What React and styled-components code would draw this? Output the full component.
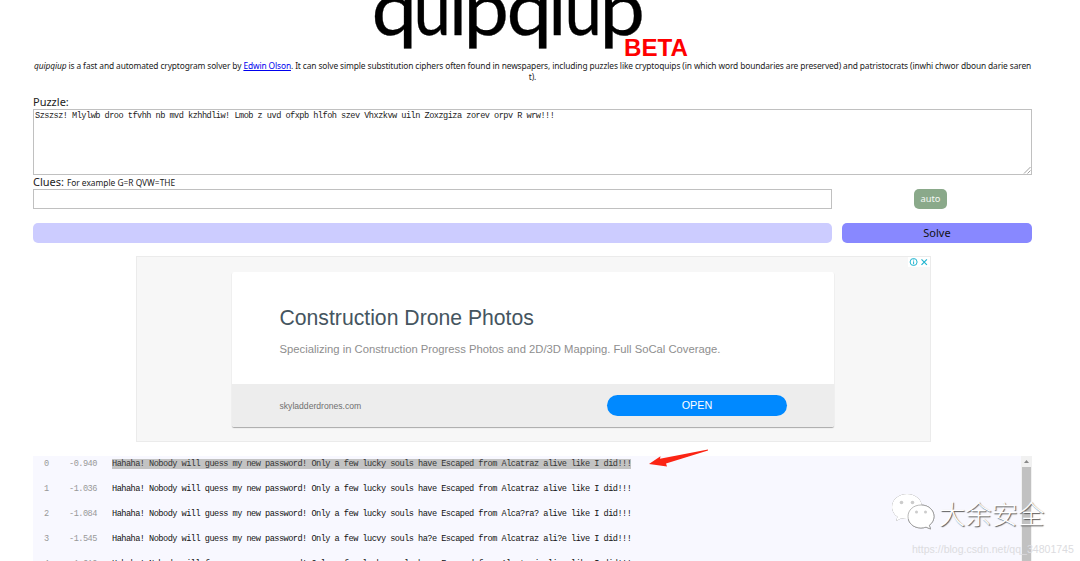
import React from 'react';
import styled, { createGlobalStyle } from 'styled-components';

const GlobalStyle = createGlobalStyle`
  * { box-sizing: border-box; }
  html, body { margin: 0; height: 561px; overflow: hidden; background: #fff; }
`;

const Page = styled.div`
  position: relative;
  width: 1080px;
  height: 561px;
  overflow: hidden;
  padding: 0 48px 0 33px;
  display: flex;
  flex-direction: column;
  font-family: 'Noto Sans', 'Open Sans', sans-serif;
  color: #222;
`;

const Header = styled.header`
  height: 60px;
  flex: none;
  padding-left: 337px;
  svg { display: block; }
`;

const Intro = styled.p`
  margin: 0;
  height: 35px;
  flex: none;
  text-align: center;
  font-size: 8.4px;
  line-height: 11px;
`;

const IntroLine = styled.span`
  display: block;
  white-space: nowrap;
  letter-spacing: -0.118px;
  a { color: #0000ee; text-decoration: underline; }
`;

const Label = styled.label`
  display: block;
  flex: none;
  height: ${(p) => p.$height};
  line-height: ${(p) => p.$height};
  font-size: 11px;
  white-space: nowrap;
  small { font-size: 8.35px; }
`;

const mono = `
  font-family: 'Liberation Mono', monospace;
  font-size: 8.6px;
  letter-spacing: -0.52px;
  white-space: pre;
`;

const PuzzleBox = styled.div`
  position: relative;
  flex: none;
  width: 999px;
  height: 66px;
  border: 1px solid #c0c0c0;
  padding: 1px 1px;
  line-height: 11px;
  color: #222;
  ${mono}
`;

const Grip = styled.svg`
  position: absolute;
  right: 0;
  bottom: 0;
`;

const FormRow = styled.div`
  display: grid;
  grid-template-columns: 799px 190px;
  column-gap: 10px;
  flex: none;
  height: 20px;
  margin-bottom: ${(p) => p.$after};
`;

const ClueInput = styled.div`
  border: 1px solid #c0c0c0;
`;

const AutoButton = styled.button`
  justify-self: center;
  width: 33px;
  height: 20px;
  margin-right: 13px;
  padding: 0;
  border: 0;
  border-radius: 5px;
  background: #8aa98a;
  color: #f3f7f3;
  font: 9.3px/20px 'Noto Sans', sans-serif;
`;

const Progress = styled.div`
  border-radius: 5px;
  background: #ccccff;
`;

const SolveButton = styled.button`
  padding: 0;
  border: 0;
  border-radius: 5px;
  background: #8888ff;
  color: #111;
  font: 11px/19px 'Noto Sans', sans-serif;
`;

const Ad = styled.section`
  position: relative;
  flex: none;
  width: 795px;
  height: 186px;
  margin: 0 0 14px 103px;
  padding: 15px 0 0 95px;
  border: 1px solid #ebebeb;
  background: #f7f7f7;
  font-family: 'Liberation Sans', Arial, sans-serif;
`;

const AdMarks = styled.svg`
  position: absolute;
  top: 0;
  right: 0;
  background: #fff;
`;

const AdCard = styled.div`
  width: 602px;
  height: 155px;
  display: flex;
  flex-direction: column;
  overflow: hidden;
  border-radius: 2px;
  background: #fff;
  box-shadow: 0 1px 1px rgba(0, 0, 0, 0.32);
`;

const AdBody = styled.div`
  height: 112px;
  padding: 33px 47.5px 0;
`;

const AdTitle = styled.h2`
  margin: 0;
  font-weight: 400;
  font-size: 21.2px;
  line-height: 26px;
  color: #455560;
  white-space: nowrap;
`;

const AdText = styled.p`
  margin: 11px 0 0;
  font-size: 11.25px;
  line-height: 14px;
  color: #8e8e8e;
  white-space: nowrap;
`;

const AdFooter = styled.div`
  flex: 1;
  display: flex;
  align-items: center;
  justify-content: space-between;
  padding: 0 47px 0 47.5px;
  background: #ededed;
  color: #707070;
  font-size: 8.6px;
  span { padding-top: 1px; }
`;

const OpenButton = styled.button`
  width: 180px;
  height: 21px;
  padding: 0;
  border: 0;
  border-radius: 11px;
  background: #0089ff;
  color: #fff;
  font: 10.8px/21px 'Liberation Sans', Arial, sans-serif;
`;

const Results = styled.div`
  flex: none;
  display: flex;
  width: 999px;
  height: 120px;
  background: #f8f8ff;
`;

const ResultList = styled.div`
  flex: 1;
`;

const ResultRow = styled.div`
  display: grid;
  grid-template-columns: 36px 43px 1fr;
  height: 25.1px;
  line-height: 16px;
  color: #999;
  ${mono}
`;

const Rank = styled.span`
  padding-left: 11px;
`;

const Solution = styled.span`
  color: #111;
  mark {
    display: inline-block;
    height: 10px;
    line-height: 10px;
    background: #c3c3c3;
    color: #333;
  }
`;

const Scrollbar = styled.div`
  width: 11px;
  display: flex;
  flex-direction: column;
  align-items: center;
  background: #f1f1f1;
  svg { flex: none; }
`;

const Thumb = styled.div`
  width: 9px;
  flex: 1;
  background: #c1c1c1;
`;

const Arrow = styled.svg`
  position: absolute;
  left: 645px;
  top: 445px;
`;

const Watermark = styled.div`
  position: absolute;
  left: 890px;
  top: 490px;
  display: flex;
  align-items: center;
  gap: 4px;
  font: 300 26.3px/46px 'Noto Sans CJK SC', sans-serif;
  color: #fff;
  text-shadow: 1px 1px 1px #555;
  white-space: nowrap;
  svg { overflow: visible; filter: drop-shadow(0.5px 0.8px 0.6px #666); }
`;

const SourceUrl = styled.div`
  position: absolute;
  left: 912px;
  top: 542px;
  font: 10.55px/14px 'Liberation Sans', Arial, sans-serif;
  color: #dcdce0;
  white-space: nowrap;
`;

const logoLetters = [
  ['q', 1.4, 45.5],
  ['u', 43.5, 37.5],
  ['i', 79, null],
  ['p', 93.6, 45.5],
  ['q', 136.6, 45.5],
  ['i', 178.2, null],
  ['u', 194.4, 37.5],
  ['p', 229.6, 45.5],
];

const rows = [
  ['0', '-0.940', 'Hahaha! Nobody will guess my new password! Only a few lucky souls have Escaped from Alcatraz alive like I did!!!'],
  ['1', '-1.036', 'Hahaha! Nobody will quess my new password! Only a few lucky souls have Escaped from Alcatraz alive like I did!!!'],
  ['2', '-1.084', 'Hahaha! Nobody will guess my new password! Only a few lucky souls have Escaped from Alca?ra? alive like I did!!!'],
  ['3', '-1.545', 'Hahaha! Nobody will guess my new password! Only a few lucvy souls ha?e Escaped from Alcatraz ali?e live I did!!!'],
  ['4', '-1.610', 'Hahaha! Nobody will fuess my new password! Only a few lucky souls have Escaped from Alcatraj alive like I did!!!'],
];

export default function App() {
  return (
    <Page>
      <GlobalStyle />
      <Header>
        <svg width="330" height="60">
          <text
            y="35"
            fontFamily="Lato, sans-serif"
            fontSize="75"
            fill="#000"
            stroke="#000"
            strokeWidth="0.3"
          >
            {logoLetters.map(([letter, x, width], i) => (
              <tspan
                key={i}
                x={x}
                textLength={width ?? undefined}
                lengthAdjust={width ? 'spacingAndGlyphs' : undefined}
              >
                {letter}
              </tspan>
            ))}
          </text>
          <text x="254" y="56" fontFamily="'Liberation Sans', Arial, sans-serif" fontWeight="700" fontSize="24.5" fill="#f00" textLength="64" lengthAdjust="spacingAndGlyphs">BETA</text>
        </svg>
      </Header>
      <Intro>
        <IntroLine>
          <i>quipqiup</i> is a fast and automated cryptogram solver by <a>Edwin Olson</a>. It can solve simple
          substitution ciphers often found in newspapers, including puzzles like cryptoquips (in which word boundaries
          are preserved) and patristocrats (inwhi chwor dboun darie saren
        </IntroLine>
        <IntroLine>t).</IntroLine>
      </Intro>
      <Label $height="14px">Puzzle:</Label>
      <PuzzleBox>
        Szszsz! Mlylwb droo tfvhh nb mvd kzhhdliw! Lmob z uvd ofxpb hlfoh szev Vhxzkvw uiln Zoxzgiza zorev orpv R wrw!!!
        <Grip width="8" height="8" stroke="#888" strokeWidth="0.8">
          <path d="M1 7.5 7.5 1M4.5 7.5 7.5 4.5" />
        </Grip>
      </PuzzleBox>
      <Label $height="14px">
        Clues: <small>For example G=R QVW=THE</small>
      </Label>
      <FormRow $after="13.5px">
        <ClueInput />
        <AutoButton>auto</AutoButton>
      </FormRow>
      <FormRow $after="13.5px">
        <Progress />
        <SolveButton>Solve</SolveButton>
      </FormRow>
      <Ad>
        <AdMarks width="22" height="10" fill="none" stroke="#22b5d0">
          <circle cx="5.6" cy="5" r="3.5" />
          <path d="M5.6 4.3v3M5.6 2.5v1" />
          <path d="M13.5 2.4l5.4 5.4M18.9 2.4l-5.4 5.4" strokeWidth="1.2" />
        </AdMarks>
        <AdCard>
          <AdBody>
            <AdTitle>Construction Drone Photos</AdTitle>
            <AdText>Specializing in Construction Progress Photos and 2D/3D Mapping. Full SoCal Coverage.</AdText>
          </AdBody>
          <AdFooter>
            <span>skyladderdrones.com</span>
            <OpenButton>OPEN</OpenButton>
          </AdFooter>
        </AdCard>
      </Ad>
      <Results>
        <ResultList>
          {rows.map(([rank, score, text], i) => (
            <ResultRow key={rank}>
              <Rank>{rank}</Rank>
              <span>{score}</span>
              <Solution>{i === 0 ? <mark>{text}</mark> : text}</Solution>
            </ResultRow>
          ))}
        </ResultList>
        <Scrollbar>
          <svg width="11" height="11"><path d="M3 7 5.5 4 8 7Z" fill="#888" /></svg>
          <Thumb />
        </Scrollbar>
      </Results>
      <Arrow width="66" height="26">
        <path d="M4 19 15.5 11.2 15 13.7 63 4.5 63 5.5 21 18.5 22 21.5Z" fill="#fb2414" />
      </Arrow>
      <Watermark>
        <svg width="45" height="46">
          <path d="M17 4C8.500 4 2 9.500 2 17c0 4.200 2 7.500 5.500 9.800L6 31l5.500-2.700c2 .7 4.500.9 6.500.7C31 29 32 21 32 17 32 9.500 25.500 4 17 4Z" fill="#fff" />
          <circle cx="11.500" cy="12.500" r="1.800" fill="#ccc" />
          <circle cx="22.500" cy="12.500" r="1.800" fill="#ccc" />
          <path d="M31 15c-7.500 0-13 5-13 11.500S23.500 38 31 38c2 0 3.500-.3 5-.9L40.500 39l-1.200-3.700c3-2.300 4.700-5.300 4.700-8.800C44 20 38.500 15 31 15Z" fill="#fff" stroke="#999" strokeWidth=".7" />
          <circle cx="26.500" cy="22" r="1.500" fill="#ccc" />
          <circle cx="35.500" cy="22" r="1.500" fill="#ccc" />
        </svg>
        <span>大余安全</span>
      </Watermark>
      <SourceUrl>https://blog.csdn.net/qq_34801745</SourceUrl>
    </Page>
  );
}
